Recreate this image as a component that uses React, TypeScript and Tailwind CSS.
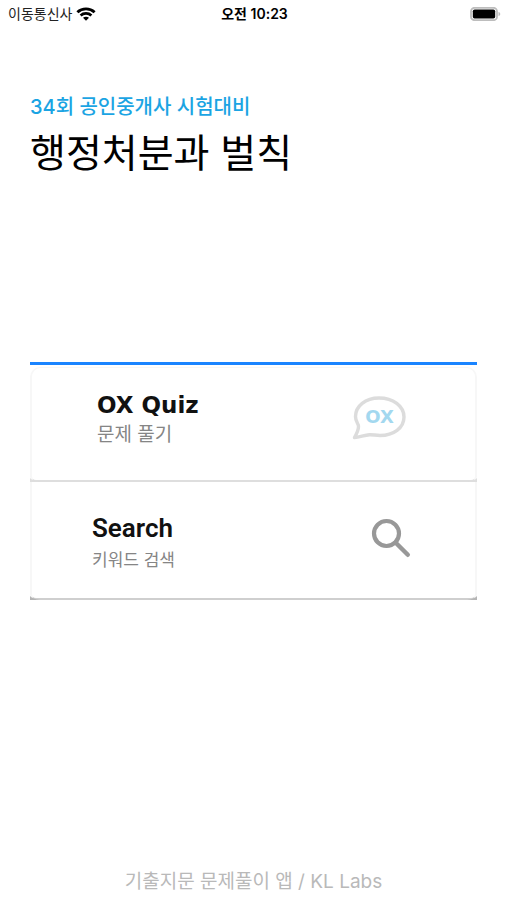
import type { ReactNode } from "react";

function WifiIcon() {
  return (
    <svg viewBox="0 0 20 14" className="h-[14px] w-5" aria-hidden="true">
      <path d="M1.4 5.2C6.2 0.7 13.8 0.7 18.6 5.2" fill="none" stroke="#000" strokeWidth="2.9" />
      <path d="M4.6 8.5C7.6 5.7 12.4 5.7 15.4 8.5" fill="none" stroke="#000" strokeWidth="2.7" />
      <path d="M7 10.8C8.6 9.3 11.4 9.3 13 10.8L10 13.8Z" fill="#000" />
    </svg>
  );
}

function BatteryIcon() {
  return (
    <svg viewBox="0 0 31 14" className="h-[14px] w-[31px]" aria-hidden="true">
      <rect x="1" y="0.8" width="26" height="12.4" rx="3.5" fill="#fff" stroke="#bdbdbd" strokeWidth="1.8" />
      <rect x="2.8" y="2.5" width="22.4" height="9" rx="1.8" fill="#000" />
      <path d="M28.5 5C30.8 5.4 30.8 8.6 28.5 9Z" fill="#bdbdbd" />
    </svg>
  );
}

function QuizIcon() {
  return (
    <svg viewBox="0 0 54 44" className="h-11 w-[54px]" aria-hidden="true">
      <path
        d="M2.5 41.5C4.5 38 6.5 34 6.5 30.5C6.5 27.5 3.5 26 3.5 20.5C3.5 10 13.5 2 27 2C41 2 52 10 52 21C52 32 41.5 39.5 28 39.5C24 39.5 20.5 38.5 17.5 38.7C12.5 39.2 7.5 41 2.5 41.5Z"
        fill="#fff"
        stroke="#dcdcdc"
        strokeWidth="3.4"
        strokeLinejoin="round"
      />
      <text
        x="27.5"
        y="27"
        textAnchor="middle"
        fill="#a3d8ef"
        className="font-['DejaVu_Sans',sans-serif] text-[18px] font-bold"
      >
        OX
      </text>
    </svg>
  );
}

function SearchIcon() {
  return (
    <svg viewBox="0 0 40 40" className="h-10 w-10" aria-hidden="true">
      <circle cx="15.5" cy="15.5" r="12.5" fill="none" stroke="#989898" strokeWidth="4.2" />
      <path d="M24.5 24.5L36.8 36.8" stroke="#989898" strokeWidth="4.4" strokeLinecap="round" />
    </svg>
  );
}

// small grey wedges that show behind the rounded bottom corners
function Corners({ color }: { color: string }) {
  return (
    <>
      <svg viewBox="0 0 10 4" className="absolute -bottom-0.5 -left-0.5 h-1 w-[10px]" aria-hidden="true">
        <path d="M0 0Q3 3 10 4H0Z" fill={color} />
      </svg>
      <svg viewBox="0 0 10 4" className="absolute -right-0.5 -bottom-0.5 h-1 w-[10px]" aria-hidden="true">
        <path d="M10 0Q7 3 0 4H10Z" fill={color} />
      </svg>
    </>
  );
}

type MenuCardProps = {
  className: string;
  cornerColor: string;
  icon: ReactNode;
  children: ReactNode;
};

function MenuCard({ className, cornerColor, icon, children }: MenuCardProps) {
  return (
    <button
      type="button"
      className={`relative flex w-full cursor-pointer justify-between border-x-2 border-x-[#f7f7f7] bg-white text-left ${className}`}
    >
      <span className="flex flex-col">{children}</span>
      {icon}
      <Corners color={cornerColor} />
    </button>
  );
}

export default function App() {
  return (
    <div className="flex min-h-screen flex-col bg-white font-[Inter,'Noto_Sans_CJK_KR',sans-serif] text-black">
      <header className="grid grid-cols-3 items-center pt-1 pr-[6px] pl-2 text-[14px] leading-5">
        <div className="flex items-center gap-1">
          <span className="whitespace-nowrap text-[#222]">이동통신사</span>
          <WifiIcon />
        </div>
        <span className="text-center font-semibold">오전 10:23</span>
        <span className="justify-self-end">
          <BatteryIcon />
        </span>
      </header>

      <main className="flex flex-1 flex-col px-[30px] pt-[69px]">
        <p className="text-[20px] leading-7 font-medium text-[#1ba4e3]">34회 공인중개사 시험대비</p>
        <h1 className="mt-1 text-[39px] leading-[56px]">행정처분과 벌칙</h1>

        <nav className="mt-[181px] border-t-[3px] border-t-[#1a84ff] pt-0.5">
          <MenuCard
            className="h-[115px] rounded-t-[10px] rounded-b-[6px] border-t border-b-2 border-t-[#f7f7f7] border-b-[#dedede] pt-[21px] pr-[69px] pl-[65px]"
            cornerColor="#dedede"
            icon={
              <span className="mt-[7px]">
                <QuizIcon />
              </span>
            }
          >
            <span className="font-['DejaVu_Sans',sans-serif] text-[23px] leading-8 font-bold text-[#111]">
              OX Quiz
            </span>
            <span className="text-[19px] leading-7 text-[#858585]">문제 풀기</span>
          </MenuCard>
          <MenuCard
            className="h-[118px] rounded-b-[6px] border-b-2 border-b-[#cfcfcf] pt-[30px] pr-16 pl-[60px]"
            cornerColor="#b5b5b5"
            icon={
              <span className="mt-[6px]">
                <SearchIcon />
              </span>
            }
          >
            <span className="font-[Roboto,sans-serif] text-[26px] leading-8 font-semibold text-[#111]">
              Search
            </span>
            <span className="mt-0.5 text-[17px] leading-7 text-[#858585]">키워드 검색</span>
          </MenuCard>
        </nav>
      </main>

      <footer className="pb-1 text-center text-[19px] leading-7 text-[#b9b9b9]">
        기출지문 문제풀이 앱 / KL Labs
      </footer>
    </div>
  );
}
